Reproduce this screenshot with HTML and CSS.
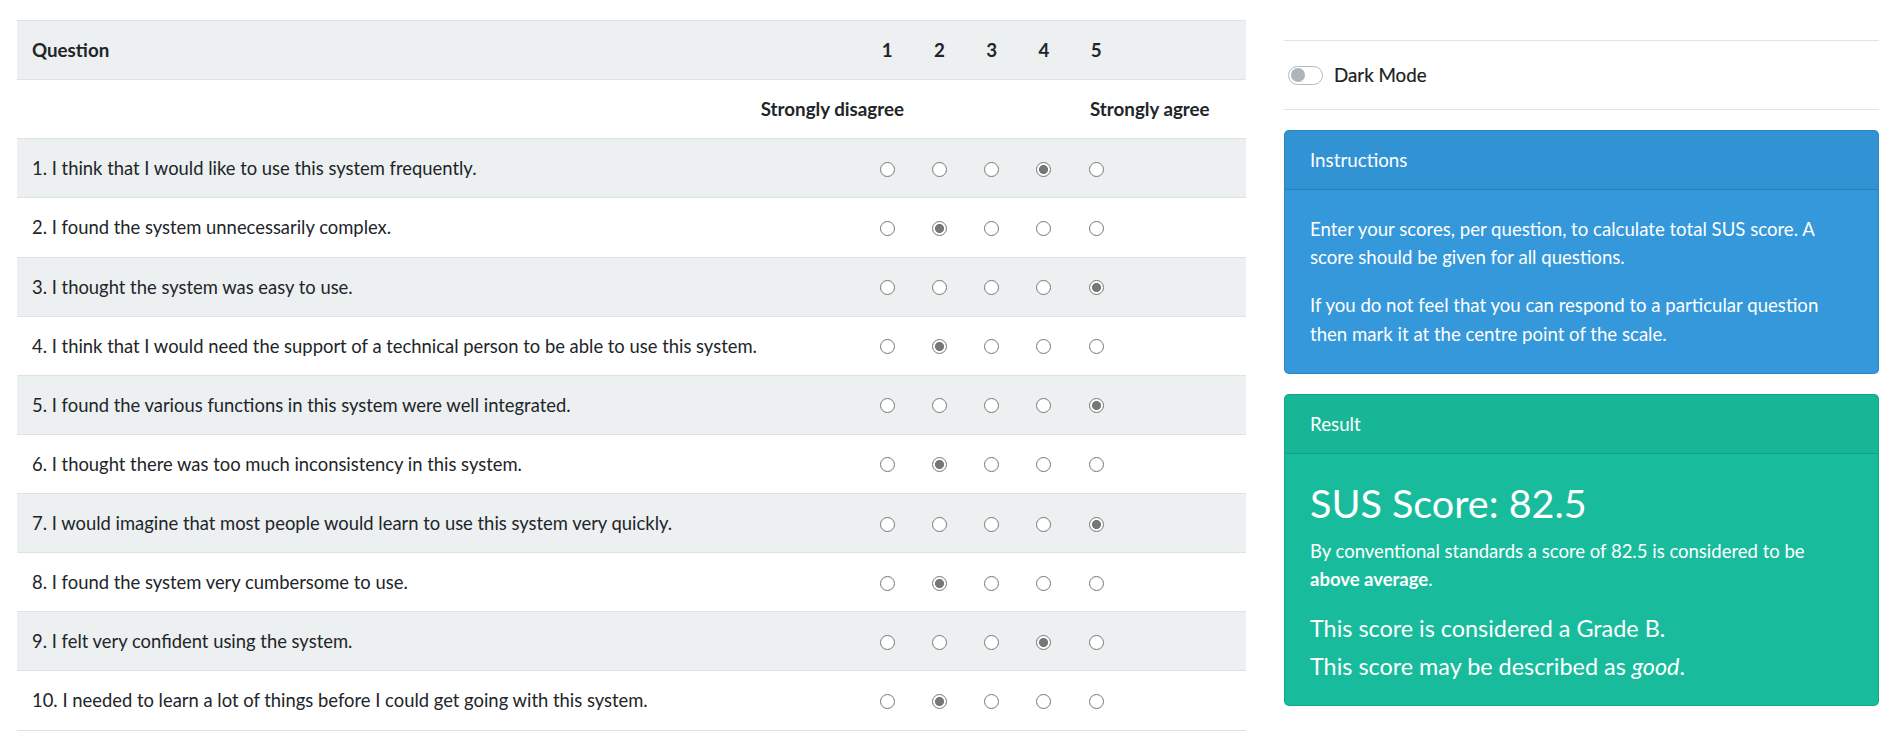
FILE: index.html
```html
<!DOCTYPE html>
<html lang="en">
<head>
<meta charset="utf-8">
<title>SUS Calculator</title>
<link rel="stylesheet" href="styles.css">
</head>
<body>
<div class="page">
  <div class="survey">
    <div class="row head">
      <div class="cell q">Question</div>
      <div class="cell n">1</div>
      <div class="cell n">2</div>
      <div class="cell n">3</div>
      <div class="cell n">4</div>
      <div class="cell n">5</div>
      <div class="cell"></div>
    </div>
    <div class="row labels">
      <div class="cell disagree">Strongly disagree</div>
      <div class="cell gap"></div>
      <div class="cell agree">Strongly agree</div>
    </div>
    <div class="row odd">
      <div class="cell q">1. I think that I would like to use this system frequently.</div>
      <div class="cell n"><input type="radio" name="q1"></div>
      <div class="cell n"><input type="radio" name="q1"></div>
      <div class="cell n"><input type="radio" name="q1"></div>
      <div class="cell n"><input type="radio" name="q1" checked></div>
      <div class="cell n"><input type="radio" name="q1"></div>
      <div class="cell"></div>
    </div>
    <div class="row">
      <div class="cell q">2. I found the system unnecessarily complex.</div>
      <div class="cell n"><input type="radio" name="q2"></div>
      <div class="cell n"><input type="radio" name="q2" checked></div>
      <div class="cell n"><input type="radio" name="q2"></div>
      <div class="cell n"><input type="radio" name="q2"></div>
      <div class="cell n"><input type="radio" name="q2"></div>
      <div class="cell"></div>
    </div>
    <div class="row odd">
      <div class="cell q">3. I thought the system was easy to use.</div>
      <div class="cell n"><input type="radio" name="q3"></div>
      <div class="cell n"><input type="radio" name="q3"></div>
      <div class="cell n"><input type="radio" name="q3"></div>
      <div class="cell n"><input type="radio" name="q3"></div>
      <div class="cell n"><input type="radio" name="q3" checked></div>
      <div class="cell"></div>
    </div>
    <div class="row">
      <div class="cell q">4. I think that I would need the support of a technical person to be able to use this system.</div>
      <div class="cell n"><input type="radio" name="q4"></div>
      <div class="cell n"><input type="radio" name="q4" checked></div>
      <div class="cell n"><input type="radio" name="q4"></div>
      <div class="cell n"><input type="radio" name="q4"></div>
      <div class="cell n"><input type="radio" name="q4"></div>
      <div class="cell"></div>
    </div>
    <div class="row odd">
      <div class="cell q">5. I found the various functions in this system were well integrated.</div>
      <div class="cell n"><input type="radio" name="q5"></div>
      <div class="cell n"><input type="radio" name="q5"></div>
      <div class="cell n"><input type="radio" name="q5"></div>
      <div class="cell n"><input type="radio" name="q5"></div>
      <div class="cell n"><input type="radio" name="q5" checked></div>
      <div class="cell"></div>
    </div>
    <div class="row">
      <div class="cell q">6. I thought there was too much inconsistency in this system.</div>
      <div class="cell n"><input type="radio" name="q6"></div>
      <div class="cell n"><input type="radio" name="q6" checked></div>
      <div class="cell n"><input type="radio" name="q6"></div>
      <div class="cell n"><input type="radio" name="q6"></div>
      <div class="cell n"><input type="radio" name="q6"></div>
      <div class="cell"></div>
    </div>
    <div class="row odd">
      <div class="cell q">7. I would imagine that most people would learn to use this system very quickly.</div>
      <div class="cell n"><input type="radio" name="q7"></div>
      <div class="cell n"><input type="radio" name="q7"></div>
      <div class="cell n"><input type="radio" name="q7"></div>
      <div class="cell n"><input type="radio" name="q7"></div>
      <div class="cell n"><input type="radio" name="q7" checked></div>
      <div class="cell"></div>
    </div>
    <div class="row">
      <div class="cell q">8. I found the system very cumbersome to use.</div>
      <div class="cell n"><input type="radio" name="q8"></div>
      <div class="cell n"><input type="radio" name="q8" checked></div>
      <div class="cell n"><input type="radio" name="q8"></div>
      <div class="cell n"><input type="radio" name="q8"></div>
      <div class="cell n"><input type="radio" name="q8"></div>
      <div class="cell"></div>
    </div>
    <div class="row odd">
      <div class="cell q">9. I felt very confident using the system.</div>
      <div class="cell n"><input type="radio" name="q9"></div>
      <div class="cell n"><input type="radio" name="q9"></div>
      <div class="cell n"><input type="radio" name="q9"></div>
      <div class="cell n"><input type="radio" name="q9" checked></div>
      <div class="cell n"><input type="radio" name="q9"></div>
      <div class="cell"></div>
    </div>
    <div class="row">
      <div class="cell q">10. I needed to learn a lot of things before I could get going with this system.</div>
      <div class="cell n"><input type="radio" name="q10"></div>
      <div class="cell n"><input type="radio" name="q10" checked></div>
      <div class="cell n"><input type="radio" name="q10"></div>
      <div class="cell n"><input type="radio" name="q10"></div>
      <div class="cell n"><input type="radio" name="q10"></div>
      <div class="cell"></div>
    </div>
  </div>

  <aside class="side">
    <div class="mode">
      <span class="switch"><span class="knob"></span></span>
      <span class="mode-label">Dark Mode</span>
    </div>
    <div class="card info">
      <div class="card-header">Instructions</div>
      <div class="card-body">
        <p>Enter your scores, per question, to calculate total SUS score. A score should be given for all questions.</p>
        <p class="last">If you do not feel that you can respond to a particular question then mark it at the centre point of the scale.</p>
      </div>
    </div>
    <div class="card success">
      <div class="card-header">Result</div>
      <div class="card-body result-body">
        <h3 class="score">SUS Score: 82.5</h3>
        <p class="verdict">By conventional standards a score of 82.5 is considered to be <strong>above average</strong>.</p>
        <p class="lead">This score is considered a Grade B.</p>
        <p class="lead last">This score may be described as <em>good</em>.</p>
      </div>
    </div>
  </aside>
</div>
</body>
</html>
```

FILE: styles.css
```css
* { box-sizing: border-box; }

body {
  margin: 0;
  font-family: Lato, "Noto Sans", sans-serif;
  font-size: 18.75px;
  line-height: 28.125px;
  color: #212529;
  background: #fff;
}

.page {
  display: grid;
  grid-template-columns: 1229px 595px;
  column-gap: 38px;
  padding: 20px 13px 0 17px;
  align-items: start;
}

/* ---------- survey table ---------- */
.survey {
  border-top: 1px solid #dee2e6;
}

.row {
  display: grid;
  grid-template-columns: 844px repeat(5, 52.25px) 1fr;
  border-bottom: 1px solid #dee2e6;
  background: #fff;
}

.row.head,
.row.odd {
  background: #ecf0f1;
}

.cell {
  padding: 15px;
  min-height: 58.125px;
}

.cell.q {
  font-size: 18.4px;
}

.head .cell {
  font-weight: 700;
  font-size: 18.75px;
}

.cell.n {
  padding: 15px 0;
  display: flex;
  align-items: center;
  justify-content: center;
}

.labels {
  grid-template-columns: 896px 157px 1fr;
  font-weight: 700;
}

.labels .disagree {
  text-align: right;
  padding-right: 9px;
}

.labels .agree {
  padding-left: 20px;
}

/* radios */
input[type="radio"] {
  -webkit-appearance: none;
  appearance: none;
  margin: 0;
  width: 15px;
  height: 15px;
  border: 1.5px solid #777;
  border-radius: 50%;
  background: #fff;
  position: relative;
  top: 1px;
}

input[type="radio"]:checked {
  background: radial-gradient(circle, #777 0 4.2px, #fff 4.8px);
}

/* ---------- side column ---------- */
.side {
  padding-top: 20px;
}

.mode {
  display: flex;
  align-items: center;
  gap: 11px;
  height: 70px;
  padding-left: 4px;
  border-top: 1px solid #e3e3e3;
  border-bottom: 1px solid #e3e3e3;
}

.switch {
  width: 35px;
  height: 19px;
  border: 1px solid #b4bac0;
  border-radius: 10px;
  background: #fff;
  display: flex;
  align-items: center;
  padding-left: 2px;
}

.knob {
  width: 14px;
  height: 14px;
  border-radius: 50%;
  background: #adb5bd;
}

.mode-label {
  color: #1b1e21;
  -webkit-text-stroke: 0.2px #1b1e21;
}

.card {
  margin-top: 20px;
  border: 1px solid rgba(0, 0, 0, 0.125);
  border-radius: 5px;
  color: #fff;
  overflow: hidden;
}

.card.info { background: #3498db; }
.card.success { background: #18bc9c; }

.card-header {
  padding: 15px 25px;
  background: rgba(0, 0, 0, 0.03);
  border-bottom: 1px solid rgba(0, 0, 0, 0.125);
}

.card-body {
  padding: 25px;
}

.card-body p {
  margin: 0 0 20px;
  font-size: 18.6px;
}

.card-body p.last {
  margin-bottom: 0;
}

.result-body {
  padding-bottom: 20px;
}

.score {
  margin: 0 0 10px;
  font-size: 39.5px;
  font-weight: 400;
  line-height: 48px;
}

.card-body p.verdict {
  font-size: 18.5px;
  margin-bottom: 17px;
}

.card-body p.lead {
  font-size: 23.4px;
  line-height: 37.5px;
  margin-bottom: 0;
}
```
